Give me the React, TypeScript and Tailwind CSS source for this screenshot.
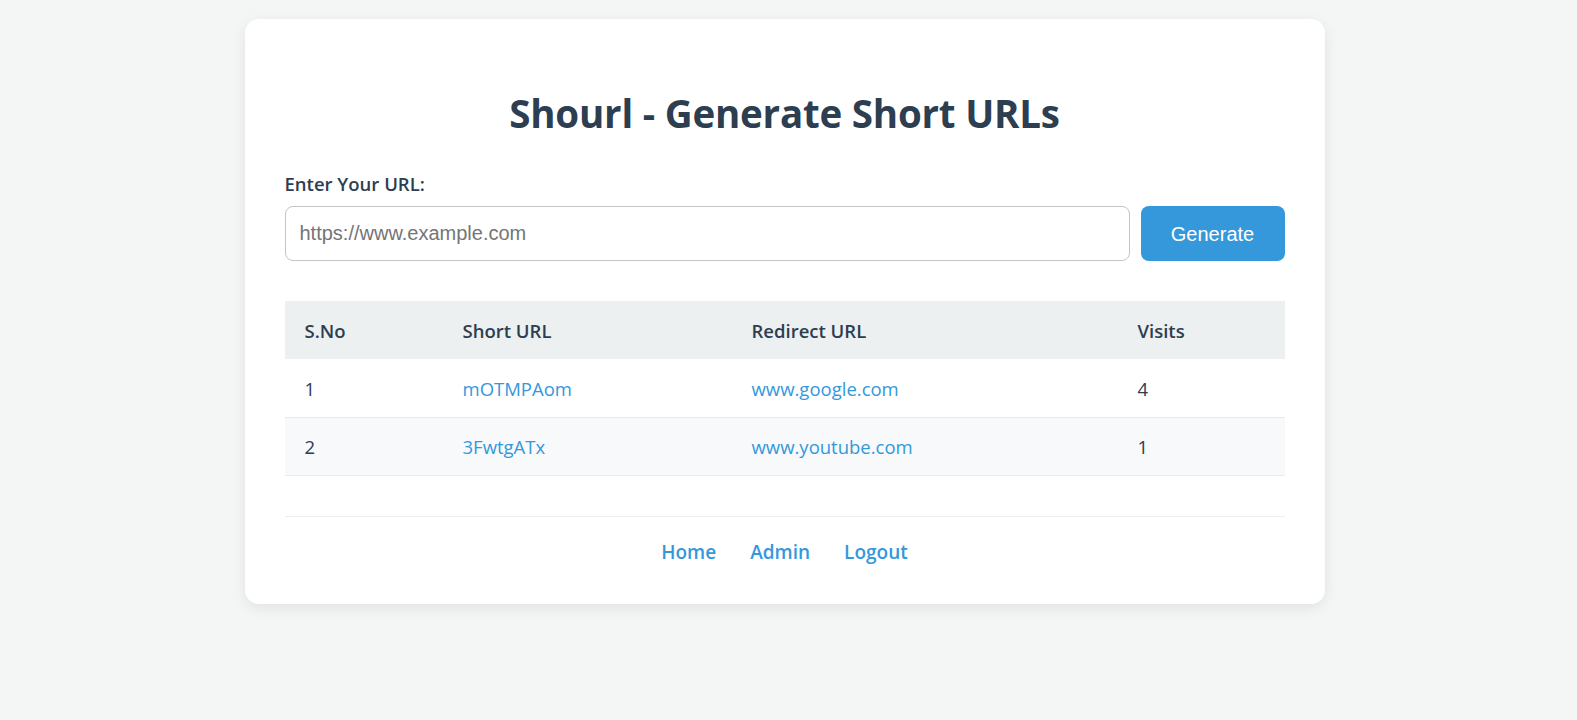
import React, { useState } from 'react';

interface UrlRow {
  id: number;
  short: string;
  redirect: string;
  visits: number;
}

const rows: UrlRow[] = [
  { id: 1, short: 'mOTMPAom', redirect: 'www.google.com', visits: 4 },
  { id: 2, short: '3FwtgATx', redirect: 'www.youtube.com', visits: 1 },
];

const App: React.FC = () => {
  const [url, setUrl] = useState('');

  return (
    <div className="min-h-screen bg-[#f4f6f6] pt-[19px] pr-2 font-['Open_Sans',sans-serif] text-[#2c3e50]">
      <div className="mx-auto w-[1080px] rounded-[14px] bg-white px-10 pt-[40px] pb-[38px] shadow-[0_4px_14px_rgba(0,0,0,0.08)]">
        {/* Title */}
        <h1 className="mt-[30px] mb-[34px] text-center text-[38.5px] font-bold leading-[48px] tracking-[-0.2px]">
          Shourl - Generate Short URLs
        </h1>

        {/* URL form */}
        <label className="mb-[10px] block text-[18.5px] font-semibold leading-[25px]">Enter Your URL:</label>
        <div className="flex gap-[11px]">
          <input
            value={url}
            onChange={(e) => setUrl(e.target.value)}
            placeholder="https://www.example.com"
            className="h-[55px] flex-1 rounded-lg border border-[#c4c4c4] px-[14px] font-['Liberation_Sans',Arial,sans-serif] text-[20px] outline-none placeholder:text-[#757575]"
          />
          <button className="h-[55px] w-[144px] rounded-lg bg-[#3498db] font-['Liberation_Sans',Arial,sans-serif] text-[20px] text-white">
            Generate
          </button>
        </div>

        {/* Table of urls */}
        <table className="mt-[40px] w-full border-collapse text-left text-[18.5px]">
          <thead>
            <tr className="h-[58px] bg-[#ecf0f1]">
              <th className="w-[158px] px-5 pt-[2px] font-semibold">S.No</th>
              <th className="w-[289px] px-5 pt-[2px] font-semibold">Short URL</th>
              <th className="w-[386px] px-5 pt-[2px] font-semibold">Redirect URL</th>
              <th className="px-5 pt-[2px] font-semibold">Visits</th>
            </tr>
          </thead>
          <tbody>
            {rows.map((row, i) => (
              <tr key={row.id} className={`h-[58px] border-b border-[#e8ebed] ${i % 2 === 1 ? 'bg-[#f8f9fa]' : 'bg-white'}`}>
                <td className="px-5 pt-[2px]">{row.id}</td>
                <td className="px-5 pt-[2px] text-[#3498db]">{row.short}</td>
                <td className="px-5 pt-[2px] text-[#3498db]">{row.redirect}</td>
                <td className="px-5 pt-[2px]">{row.visits}</td>
              </tr>
            ))}
          </tbody>
        </table>

        {/* Footer nav */}
        <div className="mt-[40px] border-t border-[#eeeeee] pt-[21px] text-center">
          <a className="mx-[17px] text-[19px] font-semibold text-[#3498db]">Home</a>
          <a className="mx-[17px] text-[19px] font-semibold text-[#3498db]">Admin</a>
          <a className="mx-[17px] text-[19px] font-semibold text-[#3498db]">Logout</a>
        </div>
      </div>
    </div>
  );
};

export default App;
